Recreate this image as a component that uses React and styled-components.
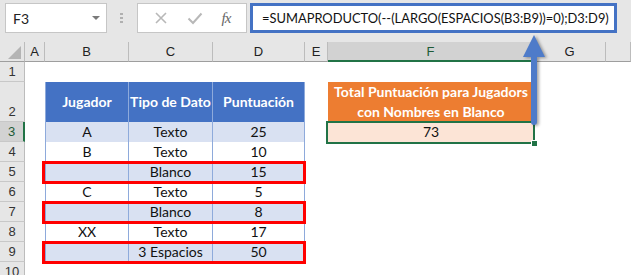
import React from "react";
import styled, { createGlobalStyle } from "styled-components";

const GlobalStyle = createGlobalStyle`
  html, body { margin: 0; padding: 0; background: #ffffff; }
  body { font-family: Lato, "Liberation Sans", sans-serif; }
`;

const Root = styled.div`
  position: relative;
  width: 631px;
  height: 275px;
  overflow: hidden;
  background: #ffffff;
`;

const FormulaBar = styled.div`
  display: flex;
  align-items: stretch;
  height: 30px;
  padding: 3px 0 9px 5px;
  background: #e6e6e6;
`;

const NameBox = styled.div`
  position: relative;
  box-sizing: border-box;
  width: 102px;
  display: flex;
  align-items: center;
  padding-left: 7px;
  background: #ffffff;
  border: 1px solid #c6c6c6;
  font-size: 14px;
  color: #222;
`;

const DropArrow = styled.span`
  margin-left: auto;
  margin-right: 6px;
  width: 0;
  height: 0;
  border-left: 4px solid transparent;
  border-right: 4px solid transparent;
  border-top: 4px solid #7a7a7a;
`;

const Dots = styled.div`
  width: 4px;
  margin-left: 13px;
  display: flex;
  flex-direction: column;
  justify-content: center;
  gap: 2px;
  & > span { width: 3px; height: 2px; background: #b0b0b0; }
`;

const ButtonBox = styled.div`
  box-sizing: border-box;
  width: 110px;
  margin-left: 13px;
  display: flex;
  align-items: center;
  justify-content: space-around;
  padding: 0 6px;
  background: #ffffff;
  border: 1px solid #c6c6c6;
`;

const Fx = styled.span`
  font-family: "Liberation Serif", serif;
  font-style: italic;
  font-size: 15px;
  color: #666;
  letter-spacing: -1px;
`;

const FormulaInput = styled.div`
  box-sizing: border-box;
  width: 367px;
  margin-left: 3px;
  display: flex;
  align-items: center;
  padding-left: 9px;
  background: #ffffff;
  border: 3px solid #4472c4;
  font-size: 12.9px;
  color: #111;
  white-space: nowrap;
  overflow: hidden;
`;

const Sheet = styled.div`
  display: grid;
  grid-template-columns: 25px 20px 84px 84px 92px 23px 206px 72px 25px;
  grid-template-rows: 20px 20px 40px repeat(7, 20px) 20px;
`;

const ColHead = styled.div`
  box-sizing: border-box;
  display: flex;
  align-items: center;
  justify-content: center;
  background: ${(p) => (p.$active ? "#d2d2d2" : "#e6e6e6")};
  border-right: 1px solid #bcbcbc;
  border-bottom: ${(p) => (p.$active ? "2px solid #217346" : "1px solid #9e9e9e")};
  font-size: 13px;
  color: ${(p) => (p.$active ? "#1e5a36" : "#222")};
  font-family: "Liberation Sans", sans-serif;
`;

const Corner = styled.div`
  box-sizing: border-box;
  position: relative;
  background: #e6e6e6;
  border-right: 1px solid #bcbcbc;
  border-bottom: 1px solid #9e9e9e;
  & > span {
    position: absolute;
    right: 3px;
    bottom: 2px;
    width: 0;
    height: 0;
    border-left: 13px solid transparent;
    border-bottom: 13px solid #b4b4b4;
  }
`;

const RowHead = styled.div`
  box-sizing: border-box;
  display: flex;
  align-items: flex-end;
  justify-content: center;
  padding-bottom: 1px;
  background: ${(p) => (p.$active ? "#d2d2d2" : "#e6e6e6")};
  border-right: ${(p) => (p.$active ? "2px solid #217346" : "1px solid #bcbcbc")};
  border-bottom: 1px solid #c8c8c8;
  font-size: 13px;
  line-height: 17px;
  color: ${(p) => (p.$active ? "#1e5a36" : "#333")};
  font-family: "Liberation Sans", sans-serif;
`;

const Cell = styled.div`
  box-sizing: border-box;
  display: flex;
  align-items: center;
  justify-content: center;
  text-align: center;
  background: ${(p) => p.$bg || "#ffffff"};
  color: ${(p) => p.$color || "#111"};
  font-weight: ${(p) => (p.$bold ? 700 : 400)};
  font-size: 14px;
  line-height: 20px;
  border-left: ${(p) => (p.$bl ? `1px solid ${p.$bl}` : "none")};
  border-right: ${(p) => (p.$br ? `1px solid ${p.$br}` : "none")};
  white-space: nowrap;
`;

const RedBox = styled.div`
  position: absolute;
  left: 42px;
  width: 258px;
  height: 17px;
  border: 3px solid #ff0000;
  pointer-events: none;
`;

const Selection = styled.div`
  position: absolute;
  left: 326px;
  top: 121px;
  width: 205px;
  height: 19px;
  border: 2px solid #217346;
  pointer-events: none;
  & > span {
    position: absolute;
    right: -5px;
    bottom: -5px;
    width: 5px;
    height: 5px;
    background: #217346;
    border: 1px solid #ffffff;
  }
`;

const ArrowSvg = styled.svg`
  position: absolute;
  left: 518px;
  top: 32px;
  overflow: visible;
  filter: drop-shadow(2px 1px 1.5px rgba(0, 0, 0, 0.35));
`;

const headers = ["A", "B", "C", "D", "E", "F", "G", ""];
const data = [
  ["A", "Texto", "25"],
  ["B", "Texto", "10"],
  ["", "Blanco", "15"],
  ["C", "Texto", "5"],
  ["", "Blanco", "8"],
  ["XX", "Texto", "17"],
  ["", "3 Espacios", "50"],
];
const TB = "#8eaadb";

function Blank({ n }) {
  return Array.from({ length: n }, (_, i) => <Cell key={i} />);
}

export default function App() {
  return (
    <Root>
      <GlobalStyle />
      <FormulaBar>
        <NameBox>
          F3
          <DropArrow />
        </NameBox>
        <Dots>
          <span />
          <span />
          <span />
        </Dots>
        <ButtonBox>
          <svg width="14" height="14" viewBox="0 0 14 14">
            <path d="M2 2 L12 12 M12 2 L2 12" stroke="#b8b8b8" strokeWidth="1.6" />
          </svg>
          <svg width="16" height="14" viewBox="0 0 16 14">
            <path d="M1.5 7.5 L6 12 L14.5 2.5" stroke="#b8b8b8" strokeWidth="2" fill="none" />
          </svg>
          <Fx>fx</Fx>
        </ButtonBox>
        <FormulaInput>=SUMAPRODUCTO(--(LARGO(ESPACIOS(B3:B9))=0);D3:D9)</FormulaInput>
      </FormulaBar>
      <Sheet>
        <Corner>
          <span />
        </Corner>
        {headers.map((h, i) => (
          <ColHead key={i} $active={h === "F"}>
            {h}
          </ColHead>
        ))}

        <RowHead>1</RowHead>
        <Blank n={8} />

        <RowHead>2</RowHead>
        <Cell />
        <Cell $bg="#4472c4" $color="#fff" $bold $bl={TB} $br={TB}>Jugador</Cell>
        <Cell $bg="#4472c4" $color="#fff" $bold $br={TB}>Tipo de Dato</Cell>
        <Cell $bg="#4472c4" $color="#fff" $bold $br={TB}>Puntuación</Cell>
        <Cell />
        <Cell $bg="#ed7d31" $color="#fff" $bold>
          Total Puntuación para Jugadors
          <br />
          con Nombres en Blanco
        </Cell>
        <Blank n={2} />

        {data.map((r, i) => {
          const bg = i % 2 === 0 ? "#d9e1f2" : "#ffffff";
          return (
            <React.Fragment key={i}>
              <RowHead $active={i === 0}>{i + 3}</RowHead>
              <Cell />
              <Cell $bg={bg} $bl={TB} $br={TB}>{r[0]}</Cell>
              <Cell $bg={bg} $br={TB}>{r[1]}</Cell>
              <Cell $bg={bg} $br={TB}>{r[2]}</Cell>
              <Cell />
              {i === 0 ? <Cell $bg="#fce4d6">73</Cell> : <Cell />}
              <Blank n={2} />
            </React.Fragment>
          );
        })}

        <RowHead>10</RowHead>
        <Blank n={8} />
      </Sheet>

      <RedBox style={{ top: 161 }} />
      <RedBox style={{ top: 201 }} />
      <RedBox style={{ top: 241 }} />
      <Selection>
        <span />
      </Selection>
      <ArrowSvg width="30" height="96" viewBox="0 0 30 96">
        <path d="M16 20 L16 90" stroke="#4e7bc9" strokeWidth="6" strokeLinecap="round" />
        <path d="M16 3 L27 25 L5 25 Z" fill="#4e7bc9" />
      </ArrowSvg>
    </Root>
  );
}
